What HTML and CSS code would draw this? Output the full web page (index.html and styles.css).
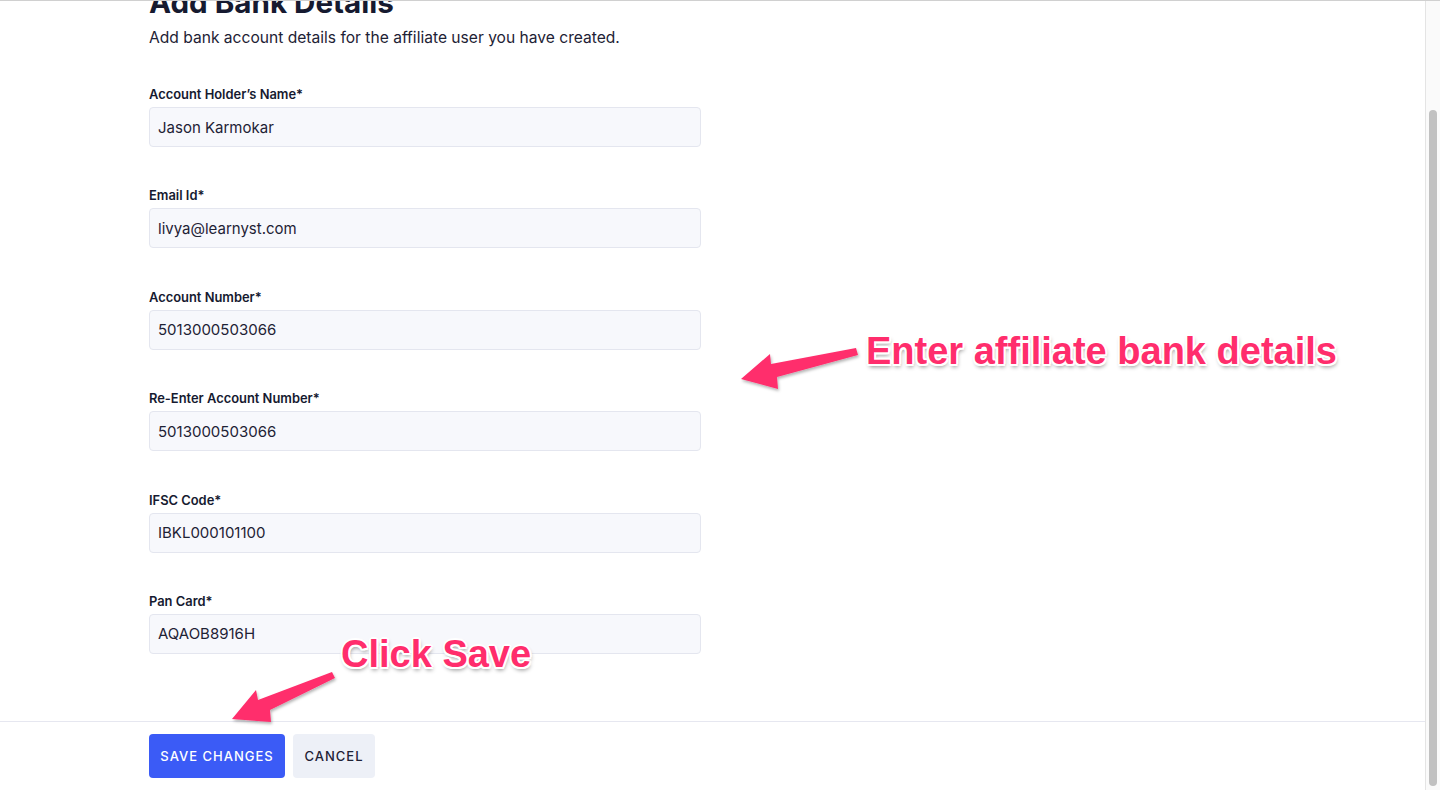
FILE: index.html
```html
<!DOCTYPE html>
<html lang="en">
<head>
<meta charset="utf-8">
<title>Add Bank Details</title>
<link rel="stylesheet" href="styles.css">
</head>
<body>
<div class="page">
  <div class="main">
    <div class="scroll">
      <h1 class="title">Add Bank Details</h1>
      <p class="subtitle">Add bank account details for the affiliate user you have created.</p>
      <form class="form">
        <div class="field">
          <label class="label">Account Holder’s Name*</label>
          <div class="input">Jason Karmokar</div>
        </div>
        <div class="field">
          <label class="label">Email Id*</label>
          <div class="input">livya@learnyst.com</div>
        </div>
        <div class="field">
          <label class="label">Account Number*</label>
          <div class="input">5013000503066</div>
        </div>
        <div class="field">
          <label class="label">Re-Enter Account Number*</label>
          <div class="input">5013000503066</div>
        </div>
        <div class="field">
          <label class="label">IFSC Code*</label>
          <div class="input">IBKL000101100</div>
        </div>
        <div class="field">
          <label class="label">Pan Card*</label>
          <div class="input">AQAOB8916H</div>
        </div>
      </form>
    </div>
    <div class="footer">
      <button class="btn btn-primary" type="button">SAVE CHANGES</button>
      <button class="btn btn-secondary" type="button">CANCEL</button>
    </div>
  </div>
  <div class="scrollbar"><div class="thumb"></div></div>
</div>

<div class="note note-bank">Enter affiliate bank details</div>
<div class="note note-save">Click Save</div>
<svg class="arrows" width="1440" height="790" viewBox="0 0 1440 790" xmlns="http://www.w3.org/2000/svg">
  <defs>
    <filter id="sh" x="-20%" y="-20%" width="140%" height="140%">
      <feDropShadow dx="1" dy="2" stdDeviation="1.5" flood-color="#000" flood-opacity="0.3"/>
    </filter>
  </defs>
  <polygon filter="url(#sh)" fill="#ff2d6c" points="856,348 858,355 777,377 778,389 741,379 770,354 771,364"/>
  <polygon filter="url(#sh)" fill="#ff2d6c" points="332,672 335,678 270,710 271,722 232,719 256,690 258,700"/>
</svg>
</body>
</html>
```

FILE: styles.css
```css
* { box-sizing: border-box; }
html, body { margin: 0; padding: 0; }
body {
  width: 1440px;
  height: 790px;
  overflow: hidden;
  background: #fff;
  font-family: "Inter", "Noto Sans", sans-serif;
  color: #1b1e33;
}
.page {
  display: flex;
  height: 790px;
  border-top: 1px solid #d0d0d0;
}
.main {
  flex: 1;
  display: flex;
  flex-direction: column;
}
.scroll {
  height: 720px;
  padding-left: 149px;
  overflow: hidden;
}
.title {
  margin: -15px 0 0 0;
  font-size: 29.6px;
  line-height: 32px;
  font-weight: 700;
  color: #161a30;
}
.subtitle {
  margin: 9px 0 0 0;
  font-size: 15.6px;
  line-height: 22px;
  color: #1e2235;
}
.form {
  margin-top: 38px;
  width: 552px;
}
.field { margin-bottom: 41.4px; }
.label {
  display: block;
  font-size: 12.9px;
  line-height: 16px;
  font-weight: 600;
  color: #161a30;
  margin-bottom: 4px;
}
.input {
  height: 40px;
  background: #f7f8fc;
  border: 1px solid #e4e6ef;
  border-radius: 4px;
  padding: 0 8px;
  display: flex;
  align-items: center;
  font-size: 15px;
  color: #1e2235;
}
.footer {
  flex: 1;
  border-top: 1px solid #e6e7f0;
  padding: 12px 0 0 149px;
  display: flex;
  gap: 8px;
  align-items: flex-start;
}
.btn {
  height: 44px;
  border: none;
  border-radius: 4px;
  font-family: "Inter", "Noto Sans", sans-serif;
  font-size: 13px;
  letter-spacing: 1px;
  font-weight: 500;
  padding: 0 10px;
}
.btn-primary {
  width: 136px;
  background: #3b5bf6;
  color: #fff;
}
.btn-secondary {
  width: 82px;
  background: #edf0f7;
  color: #1e2235;
}
.scrollbar {
  width: 15px;
  background: #fafafa;
  border-left: 1px solid #e4e4e4;
  padding: 109px 3px 4px 3px;
}
.thumb {
  height: 676px;
  background: #c1c1c1;
  border-radius: 4px;
}
.note {
  position: absolute;
  font-family: "Liberation Sans", Arial, sans-serif;
  font-weight: 700;
  color: #ff2d6c;
  white-space: nowrap;
  text-shadow:
    -2px 0 0 #fff, 2px 0 0 #fff, 0 -2px 0 #fff, 0 2px 0 #fff,
    -1.5px -1.5px 0 #fff, 1.5px -1.5px 0 #fff, -1.5px 1.5px 0 #fff, 1.5px 1.5px 0 #fff,
    1px 3px 4px rgba(0,0,0,0.45);
}
.note-bank {
  left: 866px;
  top: 328px;
  font-size: 38px;
  line-height: 46px;
}
.note-save {
  left: 341px;
  top: 631px;
  font-size: 38px;
  line-height: 46px;
}
.arrows {
  position: absolute;
  left: 0;
  top: 0;
  pointer-events: none;
}
```
